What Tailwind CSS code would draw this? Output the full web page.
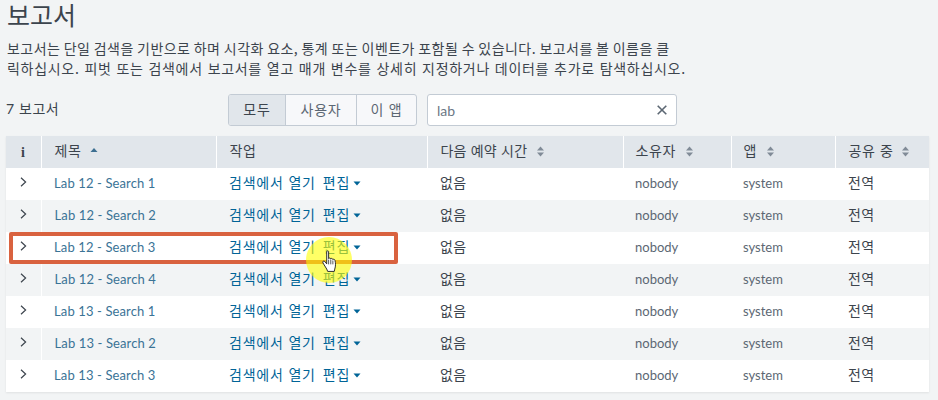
<!DOCTYPE html>
<html lang="ko">
<head>
<meta charset="utf-8">
<script src="https://cdn.jsdelivr.net/npm/@tailwindcss/browser@4"></script>
</head>
<body class="m-0 bg-[#f2f4f5]">
<div class="relative w-[938px] h-[400px] overflow-hidden bg-[#f2f4f5] text-[#3c444d] font-['Lato','Noto_Sans_CJK_KR',sans-serif]">
  <div class="px-[6px]">
    <h1 class="h-[38px] pl-px text-[25px] leading-[28px] font-normal font-['Noto_Sans_CJK_KR',sans-serif]">보고서</h1>
    <p class="h-[40px] w-[720px] pl-px text-[14px] leading-[20px] font-['Noto_Sans_CJK_KR',sans-serif]"><span class="tracking-[0.45px] [word-spacing:-1px]">보고서는 단일 검색을 기반으로 하며 시각화 요소, 통계 또는 이벤트가 포함될 수 있습니다. 보고서를 볼 이름을 클</span><br><span class="tracking-[0.7px] [word-spacing:0.25px]">릭하십시오. 피벗 또는 검색에서 보고서를 열고 매개 변수를 상세히 지정하거나 데이터를 추가로 탐색하십시오.</span></p>
    <div class="flex items-center h-[32px] mt-[16px] mb-[10px]">
      <div class="w-[222px] pb-[3px] text-[14px] leading-[20px] tracking-[0.5px] font-['Noto_Sans_CJK_KR',sans-serif]"><span class="font-['Lato']">7</span> 보고서</div>
      <div class="flex h-[32px] w-[189px] rounded-[3px] border border-[#c3cbd4] bg-[#f7f8fa] text-[14px] tracking-[0.8px] font-['Noto_Sans_CJK_KR',sans-serif] overflow-hidden">
        <div class="w-[57px] pb-[2px] flex items-center justify-center bg-[#e1e6eb] border-r border-[#c3cbd4]">모두</div>
        <div class="w-[71px] pb-[2px] flex items-center justify-center border-r border-[#c3cbd4] text-[#5c6773]">사용자</div>
        <div class="flex-1 pb-[2px] flex items-center justify-center text-[#5c6773]">이 앱</div>
      </div>
      <div class="ml-[10px] w-[250px] h-[32px] flex items-center justify-between pl-[9px] pr-[9px] bg-white rounded-[3px] border border-[#c3cbd4] text-[14px] text-[#6b7785]">
        <span>lab</span>
        <svg width="10" height="10" viewBox="0 0 10 10" class="text-[#5c6773]"><path d="M0.7 0.7 L9.3 9.3 M9.3 0.7 L0.7 9.3" stroke="currentColor" stroke-width="1.6" fill="none"/></svg>
      </div>
    </div>
    <table class="w-[923px] table-fixed border-collapse text-[13px] shadow-[0_1px_2px_rgba(0,0,0,0.08)]">
      <colgroup><col class="w-[35px]"><col class="w-[175px]"><col class="w-[211px]"><col class="w-[196px]"><col class="w-[108px]"><col class="w-[104px]"><col class="w-[94px]"></colgroup>
      <thead>
        <tr class="h-[32px] bg-[#e1e6eb] text-left text-[14px] tracking-[0.6px] font-['Noto_Sans_CJK_KR',sans-serif]">
          <th class="p-0 font-bold text-center border-r border-white font-['Liberation_Serif',serif] text-[14px]">i</th>
          <th class="p-0 pl-[13px] pb-[3px] font-normal border-r border-white"><span class="inline-flex items-center gap-[9px]">제목<svg width="8" height="4" viewBox="0 0 8 4" class="text-[#3c6f91] mt-[-1px]"><path d="M0.5 4 L4 0 L7.5 4 Z" fill="currentColor"/></svg></span></th>
          <th class="p-0 pl-[13px] pb-[3px] font-normal border-r border-white">작업</th>
          <th class="p-0 pl-[13px] pb-[3px] font-normal border-r border-white"><span class="inline-flex items-center gap-[10px]"><span class="tracking-[0.2px]">다음 예약 시간</span><svg width="7" height="11" viewBox="0 0 7 11" class="text-[#808b97] mt-[2px]"><path d="M0 4.5 L3.5 0.5 L7 4.5 Z M0 6.5 L3.5 10.5 L7 6.5 Z" fill="currentColor"/></svg></span></th>
          <th class="p-0 pl-[12px] pb-[3px] font-normal border-r border-white"><span class="inline-flex items-center gap-[10px]">소유자<svg width="7" height="11" viewBox="0 0 7 11" class="text-[#808b97] mt-[2px]"><path d="M0 4.5 L3.5 0.5 L7 4.5 Z M0 6.5 L3.5 10.5 L7 6.5 Z" fill="currentColor"/></svg></span></th>
          <th class="p-0 pl-[12px] pb-[3px] font-normal border-r border-white"><span class="inline-flex items-center gap-[10px]">앱<svg width="7" height="11" viewBox="0 0 7 11" class="text-[#808b97] mt-[2px]"><path d="M0 4.5 L3.5 0.5 L7 4.5 Z M0 6.5 L3.5 10.5 L7 6.5 Z" fill="currentColor"/></svg></span></th>
          <th class="p-0 pl-[13px] pb-[3px] font-normal"><span class="inline-flex items-center gap-[9px]">공유 중<svg width="7" height="11" viewBox="0 0 7 11" class="text-[#808b97] mt-[2px]"><path d="M0 4.5 L3.5 0.5 L7 4.5 Z M0 6.5 L3.5 10.5 L7 6.5 Z" fill="currentColor"/></svg></span></th>
        </tr>
      </thead>
      <tbody>
        <tr class="h-[32px] bg-white">
          <td class="p-0 text-center"><svg width="7" height="10" viewBox="0 0 7 10" class="inline-block align-[1px]"><path d="M1 0.8 L5.6 5 L1 9.2" stroke="currentColor" stroke-width="1.2" fill="none"/></svg></td>
          <td class="p-0 pl-[13px] text-[#3a7396] tracking-[0.12px]">Lab 12 - Search 1</td>
          <td class="p-0 pl-[13px] pb-[3px] text-[14px] tracking-[0.8px] text-[#006497] font-['Noto_Sans_CJK_KR',sans-serif]">검색에서 열기<span class="ml-[7px]">편집</span><svg width="8" height="5" viewBox="0 0 8 5" class="inline-block ml-[3px] align-[2px]"><path d="M0.5 0.5 L7.5 0.5 L4 4.5 Z" fill="currentColor"/></svg></td>
          <td class="p-0 pl-[13px] pb-[3px] text-[14px] tracking-[0.4px] font-['Noto_Sans_CJK_KR',sans-serif]">없음</td>
          <td class="p-0 pl-[12px] text-[#5c6773]">nobody</td>
          <td class="p-0 pl-[12px] text-[#5c6773]">system</td>
          <td class="p-0 pl-[13px] pb-[3px] text-[14px] tracking-[0.4px] font-['Noto_Sans_CJK_KR',sans-serif]">전역</td>
        </tr>
        <tr class="h-[32px] bg-[#f2f4f5]">
          <td class="p-0 text-center border-r border-white"><svg width="7" height="10" viewBox="0 0 7 10" class="inline-block align-[1px]"><path d="M1 0.8 L5.6 5 L1 9.2" stroke="currentColor" stroke-width="1.2" fill="none"/></svg></td>
          <td class="p-0 pl-[13px] text-[#3a7396] tracking-[0.12px]">Lab 12 - Search 2</td>
          <td class="p-0 pl-[13px] pb-[3px] text-[14px] tracking-[0.8px] text-[#006497] font-['Noto_Sans_CJK_KR',sans-serif]">검색에서 열기<span class="ml-[7px]">편집</span><svg width="8" height="5" viewBox="0 0 8 5" class="inline-block ml-[3px] align-[2px]"><path d="M0.5 0.5 L7.5 0.5 L4 4.5 Z" fill="currentColor"/></svg></td>
          <td class="p-0 pl-[13px] pb-[3px] text-[14px] tracking-[0.4px] font-['Noto_Sans_CJK_KR',sans-serif]">없음</td>
          <td class="p-0 pl-[12px] text-[#5c6773]">nobody</td>
          <td class="p-0 pl-[12px] text-[#5c6773]">system</td>
          <td class="p-0 pl-[13px] pb-[3px] text-[14px] tracking-[0.4px] font-['Noto_Sans_CJK_KR',sans-serif]">전역</td>
        </tr>
        <tr class="h-[32px] bg-white">
          <td class="p-0 text-center"><svg width="7" height="10" viewBox="0 0 7 10" class="inline-block align-[1px]"><path d="M1 0.8 L5.6 5 L1 9.2" stroke="currentColor" stroke-width="1.2" fill="none"/></svg></td>
          <td class="p-0 pl-[13px] text-[#3a7396] tracking-[0.12px]">Lab 12 - Search 3</td>
          <td class="p-0 pl-[13px] pb-[3px] text-[14px] tracking-[0.8px] text-[#006497] font-['Noto_Sans_CJK_KR',sans-serif]">검색에서 열기<span class="ml-[7px]">편집</span><svg width="8" height="5" viewBox="0 0 8 5" class="inline-block ml-[3px] align-[2px]"><path d="M0.5 0.5 L7.5 0.5 L4 4.5 Z" fill="currentColor"/></svg></td>
          <td class="p-0 pl-[13px] pb-[3px] text-[14px] tracking-[0.4px] font-['Noto_Sans_CJK_KR',sans-serif]">없음</td>
          <td class="p-0 pl-[12px] text-[#5c6773]">nobody</td>
          <td class="p-0 pl-[12px] text-[#5c6773]">system</td>
          <td class="p-0 pl-[13px] pb-[3px] text-[14px] tracking-[0.4px] font-['Noto_Sans_CJK_KR',sans-serif]">전역</td>
        </tr>
        <tr class="h-[32px] bg-[#f2f4f5]">
          <td class="p-0 text-center border-r border-white"><svg width="7" height="10" viewBox="0 0 7 10" class="inline-block align-[1px]"><path d="M1 0.8 L5.6 5 L1 9.2" stroke="currentColor" stroke-width="1.2" fill="none"/></svg></td>
          <td class="p-0 pl-[13px] text-[#3a7396] tracking-[0.12px]">Lab 12 - Search 4</td>
          <td class="p-0 pl-[13px] pb-[3px] text-[14px] tracking-[0.8px] text-[#006497] font-['Noto_Sans_CJK_KR',sans-serif]">검색에서 열기<span class="ml-[7px]">편집</span><svg width="8" height="5" viewBox="0 0 8 5" class="inline-block ml-[3px] align-[2px]"><path d="M0.5 0.5 L7.5 0.5 L4 4.5 Z" fill="currentColor"/></svg></td>
          <td class="p-0 pl-[13px] pb-[3px] text-[14px] tracking-[0.4px] font-['Noto_Sans_CJK_KR',sans-serif]">없음</td>
          <td class="p-0 pl-[12px] text-[#5c6773]">nobody</td>
          <td class="p-0 pl-[12px] text-[#5c6773]">system</td>
          <td class="p-0 pl-[13px] pb-[3px] text-[14px] tracking-[0.4px] font-['Noto_Sans_CJK_KR',sans-serif]">전역</td>
        </tr>
        <tr class="h-[32px] bg-white">
          <td class="p-0 text-center"><svg width="7" height="10" viewBox="0 0 7 10" class="inline-block align-[1px]"><path d="M1 0.8 L5.6 5 L1 9.2" stroke="currentColor" stroke-width="1.2" fill="none"/></svg></td>
          <td class="p-0 pl-[13px] text-[#3a7396] tracking-[0.12px]">Lab 13 - Search 1</td>
          <td class="p-0 pl-[13px] pb-[3px] text-[14px] tracking-[0.8px] text-[#006497] font-['Noto_Sans_CJK_KR',sans-serif]">검색에서 열기<span class="ml-[7px]">편집</span><svg width="8" height="5" viewBox="0 0 8 5" class="inline-block ml-[3px] align-[2px]"><path d="M0.5 0.5 L7.5 0.5 L4 4.5 Z" fill="currentColor"/></svg></td>
          <td class="p-0 pl-[13px] pb-[3px] text-[14px] tracking-[0.4px] font-['Noto_Sans_CJK_KR',sans-serif]">없음</td>
          <td class="p-0 pl-[12px] text-[#5c6773]">nobody</td>
          <td class="p-0 pl-[12px] text-[#5c6773]">system</td>
          <td class="p-0 pl-[13px] pb-[3px] text-[14px] tracking-[0.4px] font-['Noto_Sans_CJK_KR',sans-serif]">전역</td>
        </tr>
        <tr class="h-[32px] bg-[#f2f4f5]">
          <td class="p-0 text-center border-r border-white"><svg width="7" height="10" viewBox="0 0 7 10" class="inline-block align-[1px]"><path d="M1 0.8 L5.6 5 L1 9.2" stroke="currentColor" stroke-width="1.2" fill="none"/></svg></td>
          <td class="p-0 pl-[13px] text-[#3a7396] tracking-[0.12px]">Lab 13 - Search 2</td>
          <td class="p-0 pl-[13px] pb-[3px] text-[14px] tracking-[0.8px] text-[#006497] font-['Noto_Sans_CJK_KR',sans-serif]">검색에서 열기<span class="ml-[7px]">편집</span><svg width="8" height="5" viewBox="0 0 8 5" class="inline-block ml-[3px] align-[2px]"><path d="M0.5 0.5 L7.5 0.5 L4 4.5 Z" fill="currentColor"/></svg></td>
          <td class="p-0 pl-[13px] pb-[3px] text-[14px] tracking-[0.4px] font-['Noto_Sans_CJK_KR',sans-serif]">없음</td>
          <td class="p-0 pl-[12px] text-[#5c6773]">nobody</td>
          <td class="p-0 pl-[12px] text-[#5c6773]">system</td>
          <td class="p-0 pl-[13px] pb-[3px] text-[14px] tracking-[0.4px] font-['Noto_Sans_CJK_KR',sans-serif]">전역</td>
        </tr>
        <tr class="h-[32px] bg-white">
          <td class="p-0 text-center"><svg width="7" height="10" viewBox="0 0 7 10" class="inline-block align-[1px]"><path d="M1 0.8 L5.6 5 L1 9.2" stroke="currentColor" stroke-width="1.2" fill="none"/></svg></td>
          <td class="p-0 pl-[13px] text-[#3a7396] tracking-[0.12px]">Lab 13 - Search 3</td>
          <td class="p-0 pl-[13px] pb-[3px] text-[14px] tracking-[0.8px] text-[#006497] font-['Noto_Sans_CJK_KR',sans-serif]">검색에서 열기<span class="ml-[7px]">편집</span><svg width="8" height="5" viewBox="0 0 8 5" class="inline-block ml-[3px] align-[2px]"><path d="M0.5 0.5 L7.5 0.5 L4 4.5 Z" fill="currentColor"/></svg></td>
          <td class="p-0 pl-[13px] pb-[3px] text-[14px] tracking-[0.4px] font-['Noto_Sans_CJK_KR',sans-serif]">없음</td>
          <td class="p-0 pl-[12px] text-[#5c6773]">nobody</td>
          <td class="p-0 pl-[12px] text-[#5c6773]">system</td>
          <td class="p-0 pl-[13px] pb-[3px] text-[14px] tracking-[0.4px] font-['Noto_Sans_CJK_KR',sans-serif]">전역</td>
        </tr>
      </tbody>
    </table>
  </div>
  <div class="absolute left-[9px] top-[232px] w-[389px] h-[32px] rounded-[2px] border-[4px] border-[#d9623f]"></div>
  <div class="absolute left-[306px] top-[237px] w-[46px] h-[46px] rounded-full bg-[#ffff00]/60"></div>
  <svg class="absolute left-[322px] top-[250px]" width="17" height="23" viewBox="0 0 18 24"><path d="M5 1.5 C5 0.5 7 0.5 7 1.5 L7 9 C7.5 8 9 8 9.3 9.3 C9.8 8.4 11.3 8.6 11.5 10 C12 9.3 13.6 9.5 13.8 11 C14.5 14 14.5 17 13.5 20 L13 22.5 L6 22.5 L5 20 L1 13.5 C0.2 12 1.8 10.8 3 12 L5 14.5 Z" fill="#fff" stroke="#222" stroke-width="1"/><path d="M7 10 V15 M9.3 10 V15 M11.5 11 V15" stroke="#222" stroke-width="0.8"/></svg>
</div>
</body>
</html>
